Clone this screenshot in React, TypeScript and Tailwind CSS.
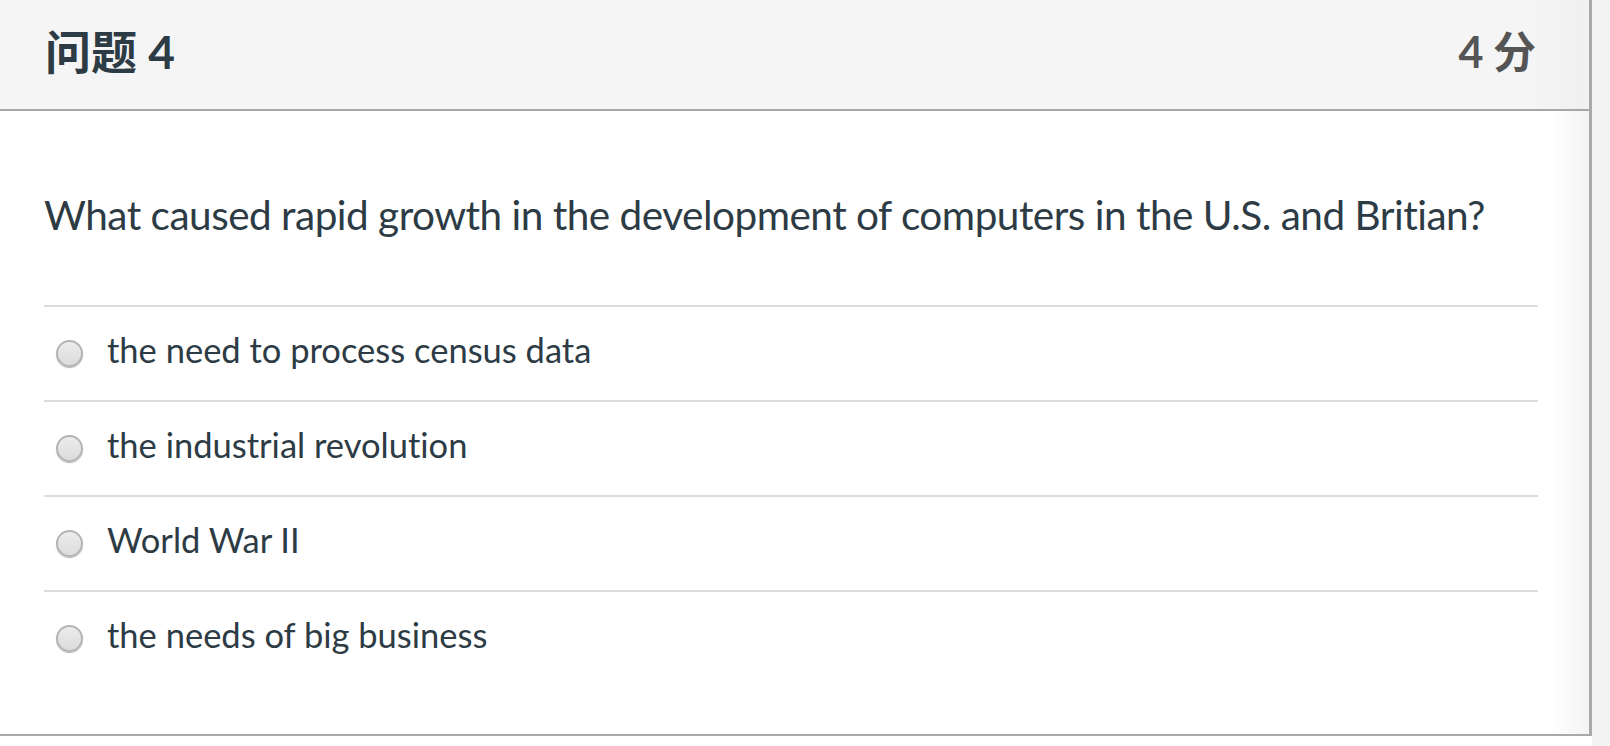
const options = [
  'the need to process census data',
  'the industrial revolution',
  'World War II',
  'the needs of big business',
];

function Radio() {
  return (
    <span className="block w-[27px] h-[27px] shrink-0 rounded-full border-2 border-[#b4b4b4] bg-[linear-gradient(#ececec,#dcdcdc)] shadow-[0_1px_1px_rgba(0,0,0,0.3)]" />
  );
}

export default function App() {
  return (
    <div className="flex w-[1610px] h-[746px] bg-white overflow-hidden [font-variant-ligatures:none]" style={{ fontFamily: 'Lato, "Noto Sans CJK SC", sans-serif' }}>
      <div className="w-[1592px] h-[736px] flex flex-col shrink-0 border-r-[3px] border-b-2 border-[#a9a9a9] bg-[linear-gradient(to_right,#ffffff_97.6%,#f3f3f3)]">
        {/* header */}
        <div className="h-[111px] shrink-0 flex items-center justify-between pl-[45px] pr-[53px] pb-[6px] bg-[linear-gradient(to_right,#f5f5f5_96%,#f0f0f0)] border-b-2 border-[#a7a7a7]">
          <h2 className="text-[46px] font-bold text-[#2d3b45] leading-none">问题 4</h2>
          <span className="text-[43px] font-bold text-[#555555] leading-none [word-spacing:-1px]">4 分</span>
        </div>

        {/* body */}
        <div className="pl-[44px] pr-[51px]">
          <p className="mt-[72px] text-[40.5px] tracking-[-0.5px] leading-[63px] text-[#2d3b45] whitespace-nowrap">
            What caused rapid growth in the development of computers in the U.S. and Britian?
          </p>
          <div className="mt-[59px]">
            {options.map((o, i) => (
              <label key={i} className="flex items-center h-[95px] gap-[24px] pl-[12px] border-t-2 border-[#dcdcdc]">
                <Radio />
                <span className="text-[34.5px] text-[#2d3b45] -mt-[8px]">{o}</span>
              </label>
            ))}
          </div>
        </div>
      </div>
      <div className="flex-1 h-full bg-[#f3f3f3]" />
    </div>
  );
}
